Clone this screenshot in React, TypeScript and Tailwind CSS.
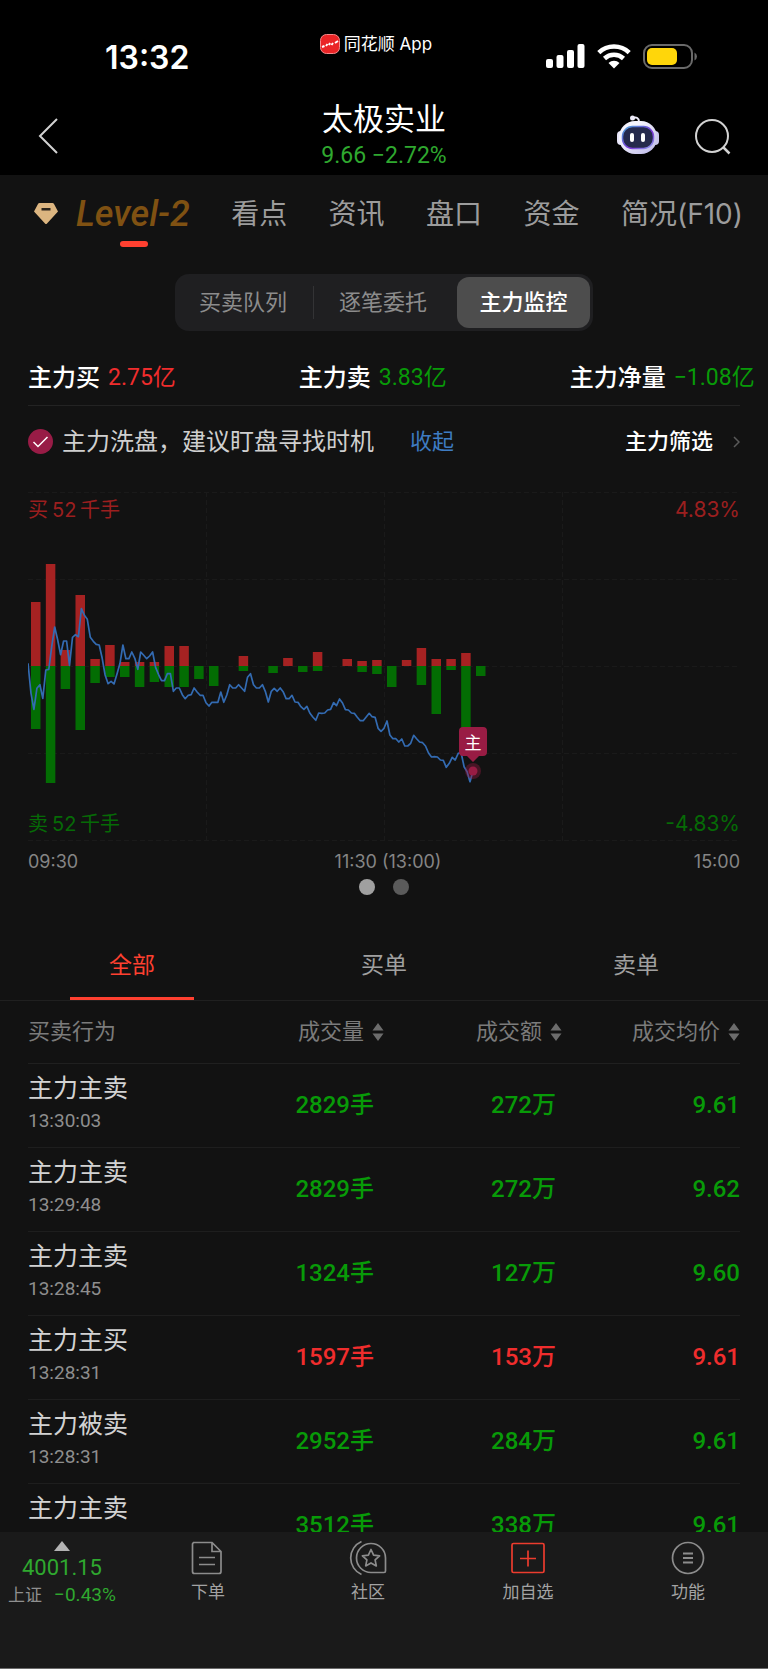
import type { ReactNode } from 'react';
import { clsx } from 'clsx';

const UP = 'text-[#f02d2d]';
const DOWN = 'text-[#089a08]';
const NUM = "font-[family-name:Roboto,'Noto_Sans_CJK_SC',sans-serif]";

const navTabs = ['看点', '资讯', '盘口', '资金', '简况(F10)'];

const trades = [
  { action: '主力主卖', time: '13:30:03', volume: '2829手', amount: '272万', price: '9.61', up: false },
  { action: '主力主卖', time: '13:29:48', volume: '2829手', amount: '272万', price: '9.62', up: false },
  { action: '主力主卖', time: '13:28:45', volume: '1324手', amount: '127万', price: '9.60', up: false },
  { action: '主力主买', time: '13:28:31', volume: '1597手', amount: '153万', price: '9.61', up: true },
  { action: '主力被卖', time: '13:28:31', volume: '2952手', amount: '284万', price: '9.61', up: false },
  { action: '主力主卖', time: '13:27:37', volume: '3512手', amount: '338万', price: '9.61', up: false },
];

// [buy, sell] per five minute slot
const volumes = [
  [64, 63], [102, 117], [16, 23], [71, 64], [7, 17], [21, 11], [4, 11], [4, 21], [4, 16], [20, 21],
  [20, 21], [0, 13], [0, 20], [0, 0], [10, 5], [0, 0], [0, 7], [8, 0], [0, 6], [14, 5],
  [0, 0], [7, 0], [5, 6], [6, 8], [0, 21], [6, 0], [18, 19], [7, 48], [7, 4], [13, 64], [0, 10],
];

// one price point per minute, three units to a pixel
const prices = [
  400, 490, 538, 475, 464, 505, 420, 418, 350, 291, 330, 374, 333, 333, 406, 322, 314, 320, 236, 256,
  268, 322, 334, 343, 345, 385, 435, 461, 454, 462, 432, 400, 345, 386, 386, 366, 385, 418, 366, 376,
  386, 378, 366, 412, 433, 452, 452, 431, 431, 484, 474, 474, 494, 506, 496, 494, 474, 486, 496, 496,
  518, 528, 517, 517, 517, 486, 517, 495, 464, 474, 474, 464, 474, 484, 442, 431, 464, 474, 474, 464,
  484, 516, 484, 475, 484, 474, 485, 506, 506, 496, 516, 517, 530, 538, 529, 549, 561, 571, 549, 550,
  549, 540, 538, 518, 527, 507, 519, 539, 540, 549, 550, 562, 572, 572, 561, 550, 560, 562, 595, 604,
  595, 573, 615, 626, 626, 636, 627, 648, 648, 640, 616, 626, 636, 638, 648, 669, 681, 680, 681, 690,
  691, 712, 700, 682, 690, 670, 668, 710, 725, 755, 723,
];

function StatusBar() {
  return (
    <div className="grid h-[90px] grid-cols-3 text-white">
      <div className="flex items-center pl-[105px] pt-[26px] text-[32px] font-semibold leading-8">13:32</div>
      <div className="flex items-start justify-center pr-4 pt-8">
        <div className="flex items-center gap-1 text-[17px] leading-6">
          <svg width="20" height="20" viewBox="0 0 20 20" aria-hidden="true">
            <rect x="0.5" y="0.5" width="19" height="19" rx="6" fill="#ea2426" stroke="#f5898a" />
            <path d="M2 13l2.500-1M6 12l1.500-2M9 11l1-2M11.500 11l1.500-2M15 9l3-2" fill="none" stroke="#fff" strokeWidth="2" />
          </svg>
          同花顺 App
        </div>
      </div>
      <div className="flex items-center justify-end gap-3 pr-[70px] pt-[22px]">
        <svg width="39" height="25" viewBox="0 0 39 25" fill="#fff" aria-hidden="true">
          <rect x="0" y="15" width="7" height="9" rx="2" />
          <rect x="10.500" y="11" width="7" height="13" rx="2" />
          <rect x="21" y="6" width="7" height="18" rx="2" />
          <rect x="31.500" y="0" width="7" height="24" rx="2" />
        </svg>
        <svg width="34" height="25" viewBox="0 0 34 25" aria-hidden="true">
          <g fill="none" stroke="#fff" strokeWidth="4.500">
            <path d="M1.800 8.700A22 22 0 0 1 32.200 8.700" />
            <path d="M7.500 14.500A14 14 0 0 1 26.500 14.500" />
          </g>
          <path d="M17 24.500l-5.500-5.500a8 8 0 0 1 11 0z" fill="#fff" />
        </svg>
        <svg width="55" height="25" viewBox="0 0 55 25" aria-hidden="true">
          <rect x="1" y="1" width="48" height="23" rx="8" fill="none" stroke="#6a6a6a" strokeWidth="2" />
          <rect x="4" y="4" width="30" height="17" rx="5" fill="#ffd60a" />
          <path d="M51.500 8.500v8q2.500-1.500 2.500-4t-2.500-4z" fill="#6a6a6a" />
        </svg>
      </div>
    </div>
  );
}

function RobotIcon() {
  return (
    <svg width="42" height="40" viewBox="0 0 42 40" aria-hidden="true">
      <defs>
        <linearGradient id="shell" x1="0" y1="0" x2="1" y2="1">
          <stop offset="0.3" stopColor="#f5f4fd" />
          <stop offset="1" stopColor="#b9b5e8" />
        </linearGradient>
        <linearGradient id="rim" x1="0" y1="0" x2="1" y2="1">
          <stop offset="0" stopColor="#4ca7d8" />
          <stop offset="0.6" stopColor="#7b35d8" />
          <stop offset="1" stopColor="#8fa4ee" />
        </linearGradient>
      </defs>
      <path d="M15 3q7-2 7 4" fill="none" stroke="#eeedfa" strokeWidth="2" />
      <circle cx="15.500" cy="3" r="2.500" fill="#eeedfa" />
      <rect x="0" y="16" width="8" height="14" rx="4" fill="#e6e4f8" />
      <rect x="34" y="16" width="8" height="14" rx="4" fill="#c9c6ec" />
      <rect x="2" y="6" width="38" height="33" rx="16" fill="url(#shell)" />
      <rect x="5.500" y="11.500" width="31" height="22" rx="10" fill="#252a4d" stroke="url(#rim)" strokeWidth="1.500" />
      <rect x="13" y="18" width="4" height="9" rx="2" fill="#fff" />
      <rect x="24" y="18" width="4" height="9" rx="2" fill="#fff" />
    </svg>
  );
}

function StockHeader() {
  return (
    <div className="grid h-[85px] grid-cols-[1fr_auto_1fr] px-9">
      <button type="button" aria-label="返回" className="flex items-center justify-self-start pt-[7px]">
        <svg width="24" height="36" viewBox="0 0 24 36" fill="none" stroke="#d2d2d2" strokeWidth="2">
          <path d="M21 1L4 18l17 17" />
        </svg>
      </button>
      <div className="pt-2 text-center">
        <h1 className="text-[31px] leading-[42px] text-white">太极实业</h1>
        <p className={clsx(NUM, 'text-[23px] leading-8 text-[#2fa82f]')}>9.66 −2.72%</p>
      </div>
      <div className="flex items-center justify-end gap-9 pt-[5px]">
        <button type="button" aria-label="助手">
          <RobotIcon />
        </button>
        <button type="button" aria-label="搜索" className="pt-1">
          <svg width="37" height="36" viewBox="0 0 37 36" fill="none" stroke="#d2d2d2" strokeWidth="2">
            <circle cx="17" cy="17" r="16" />
            <path d="M28 28l6.500 6.500" strokeWidth="2.500" />
          </svg>
        </button>
      </div>
    </div>
  );
}

function NavTabs() {
  return (
    <nav className="flex h-[78px] items-center justify-between whitespace-nowrap pl-[34px] pr-[25px] text-[28px] text-[#9c9c9c]">
      <button type="button" className="relative flex h-full items-center gap-[18px]">
        <svg width="24" height="22" viewBox="0 0 24 22" aria-hidden="true">
          <path d="M5.500 0h13q1 0 1.500 1l4 7.500L13 20.500q-1 1-2 0L0 8.500 4 1q.5-1 1.500-1z" fill="#dcb580" />
          <rect x="7.500" y="5" width="9" height="2.500" fill="#2a231a" />
        </svg>
        <span className="font-[family-name:Roboto,sans-serif] text-[36px] font-medium italic text-[#7f5112]">Level-2</span>
        <span className="absolute bottom-[6px] left-[86px] h-[6px] w-7 rounded-full bg-[#ff4030]" />
      </button>
      {navTabs.map((tab) => (
        <button type="button" key={tab}>
          {tab}
        </button>
      ))}
    </nav>
  );
}

function SegmentedControl() {
  return (
    <div className="mt-[21px] flex justify-center">
      <div className="flex h-[57px] items-center rounded-[14px] bg-[#1f1f21] p-[3px] text-[22px] text-[#8c8c8c]">
        <button type="button" className="w-[135px] pr-[5px]">买卖队列</button>
        <span className="h-[33px] w-px bg-[#333335]" />
        <button type="button" className="w-[143px] pr-[5px]">逐笔委托</button>
        <button type="button" className="h-[51px] w-[133px] rounded-[12px] bg-[#4d4d4d] font-medium text-white">
          主力监控
        </button>
      </div>
    </div>
  );
}

function Stat({ label, value, color }: { label: string; value: string; color: string }) {
  return (
    <div className="flex items-center gap-2 whitespace-nowrap">
      <span className="font-medium text-white">{label}</span>
      <span className={clsx(NUM, 'text-[23px]', color)}>{value}</span>
    </div>
  );
}

function Summary() {
  return (
    <>
      <div className="mt-5 grid h-[54px] grid-cols-[37%_37%_26%] pl-7 pr-2 text-[24px]">
        <Stat label="主力买" value="2.75亿" color={UP} />
        <Stat label="主力卖" value="3.83亿" color={DOWN} />
        <Stat label="主力净量" value="−1.08亿" color={DOWN} />
      </div>
      <div className="mx-7 flex h-[72px] items-center border-t border-[#232323]">
        <svg width="25" height="25" viewBox="0 0 25 25" aria-hidden="true">
          <circle cx="12.500" cy="12.500" r="12.500" fill="#981c46" />
          <path d="M5.500 13l4.500 4.500 9.500-9.500" fill="none" stroke="#fff" strokeWidth="1.500" />
        </svg>
        <span className="ml-[9px] text-[24px] text-[#cfcfcf]">主力洗盘，建议盯盘寻找时机</span>
        <button type="button" className="ml-9 text-[22px] text-[#3e7cc2]">收起</button>
        <button type="button" className="ml-auto flex items-center gap-5 text-[22px] font-medium text-white">
          主力筛选
          <svg width="7" height="12" viewBox="0 0 7 12" fill="none" stroke="#5a5a5a" strokeWidth="1.500">
            <path d="M1 1l5 5-5 5" />
          </svg>
        </button>
      </div>
    </>
  );
}

function MonitorChart() {
  const slot = 712 / 48;
  const line = prices.map((p, i) => `${((i * 712) / 240).toFixed(1)},${(p / 3 + 38).toFixed(1)}`).join(' ');

  return (
    <svg viewBox="0 0 712 349" className="w-full" role="img" aria-label="主力监控走势">
      <g stroke="#1a1a1a" strokeDasharray="5 3">
        {[0.5, 87.5, 174.5, 261.5, 348.5].map((y) => (
          <path key={y} d={`M0 ${y}H712`} />
        ))}
        {[178.5, 356.5, 534.5].map((x) => (
          <path key={x} d={`M${x} 0V349`} />
        ))}
      </g>
      {volumes.map(([buy, sell], i) => (
        <g key={i}>
          <rect x={i * slot + 3} y={174 - buy} width="9.500" height={buy} fill="#a62222" />
          <rect x={i * slot + 3} y="174" width="9.500" height={sell} fill="#036d03" />
        </g>
      ))}
      <polyline points={line} fill="none" stroke="#336bb2" strokeWidth="1.700" strokeLinejoin="round" />
      <g fill="#991c44">
        <circle cx="445" cy="279" r="8" opacity="0.4" />
        <circle cx="445" cy="279" r="4.500" />
        <path d="M435 235h20q4 0 4 4v21q0 4-4 4h-4l-6 6-6-6h-4q-4 0-4-4v-21q0-4 4-4z" />
      </g>
      <text x="445" y="257" textAnchor="middle" fontSize="17" fill="#fff">主</text>
      <g fontSize="20">
        <g fill="#9b1f1f">
          <text x="0" y="25">买</text>
          <text x="24" y="25">52</text>
          <text x="52" y="25">千手</text>
          <text x="712" y="25" textAnchor="end" fontSize="21">4.83%</text>
        </g>
        <g fill="#066a06">
          <text x="0" y="339">卖</text>
          <text x="24" y="339">52</text>
          <text x="52" y="339">千手</text>
          <text x="712" y="339" textAnchor="end" fontSize="21">-4.83%</text>
        </g>
      </g>
    </svg>
  );
}

function ChartPanel() {
  return (
    <div className="mx-7 mt-[15px]">
      <MonitorChart />
      <div className="grid h-[38px] grid-cols-[1fr_auto_1fr] items-center pt-[2px] text-[18px] text-[#858585]">
        <span>09:30</span>
        <span className="pl-2">11:30 (13:00)</span>
        <span className="text-right">15:00</span>
      </div>
      <div className="flex justify-center gap-[18px]">
        <button type="button" aria-label="第1页" className="h-4 w-4 rounded-full bg-[#a0a0a0]" />
        <button type="button" aria-label="第2页" className="h-4 w-4 rounded-full bg-[#5b5b5b]" />
      </div>
    </div>
  );
}

function OrderTabs() {
  return (
    <div className="mt-9 grid h-[70px] grid-cols-3 border-b border-[#202020] px-[6px] text-[23px] text-[#a0a0a0]">
      <button type="button" className="relative text-[#ff4030]">
        全部
        <span className="absolute inset-x-16 bottom-0 h-[3px] bg-[#ff4030]" />
      </button>
      <button type="button">买单</button>
      <button type="button">卖单</button>
    </div>
  );
}

function SortHeader({ children }: { children: ReactNode }) {
  return (
    <button type="button" className="inline-flex items-center gap-2">
      {children}
      <svg width="12" height="18" viewBox="0 0 12 18" fill="#6c6c6c" aria-hidden="true">
        <path d="M6 0l5.500 7.500H.5zM6 18l5.500-7.500H.5z" />
      </svg>
    </button>
  );
}

function TradeTable() {
  return (
    <div className="min-h-0 flex-1 overflow-hidden px-7">
      <table className="w-full table-fixed">
        <thead>
          <tr className="h-[62px] border-b border-[#202020] text-[22px] text-[#7b7b7b]">
            <th className="w-[29%] text-left font-normal">买卖行为</th>
            <th className="w-[21%] text-right font-normal"><SortHeader>成交量</SortHeader></th>
            <th className="w-1/4 text-right font-normal"><SortHeader>成交额</SortHeader></th>
            <th className="w-1/4 text-right font-normal"><SortHeader>成交均价</SortHeader></th>
          </tr>
        </thead>
        <tbody>
          {trades.map((t, i) => (
            <tr
              key={i}
              className={clsx(NUM, 'h-[84px] border-b border-[#1e1e1e] text-right text-[24px] font-medium', t.up ? UP : DOWN)}
            >
              <td className="text-left font-normal">
                <p className="text-[25px] leading-8 text-[#d2d2d2]">{t.action}</p>
                <p className="text-[19px] leading-8 text-[#8e8e8e]">{t.time}</p>
              </td>
              <td className="pr-[10px]">{t.volume}</td>
              <td className="pr-[6px]">{t.amount}</td>
              <td>{t.price}</td>
            </tr>
          ))}
        </tbody>
      </table>
    </div>
  );
}

function FooterItem({ label, children }: { label: string; children: ReactNode }) {
  return (
    <button type="button" className="flex flex-col items-center gap-1 text-[17px] leading-6 text-[#a3a3a3]">
      <svg width="38" height="36" viewBox="0 0 38 36" fill="none" stroke="#8c8c8c" strokeWidth="1.700">
        {children}
      </svg>
      {label}
    </button>
  );
}

function Footer() {
  return (
    <footer className="grid h-[137px] shrink-0 grid-cols-[1fr_5fr] border-b border-[#6b6b6b] bg-[#1a1a1a]">
      <button type="button" className={clsx(NUM, 'flex flex-col items-center whitespace-nowrap pr-1 pt-[9px] text-[#2fa82f]')}>
        <svg width="16" height="10" viewBox="0 0 16 10" fill="#b3b3b3" aria-hidden="true">
          <path d="M8 0l8 10H0z" />
        </svg>
        <span className="mt-[3px] text-[22px] leading-7">4001.15</span>
        <span className="flex items-center gap-3 text-[19px] leading-[26px]">
          <span className="text-[17px] text-[#8f8f8f]">上证</span>
          −0.43%
        </span>
      </button>
      <div className="grid grid-cols-4 items-start pt-2">
        <FooterItem label="下单">
          <path d="M4 2.500h19l9 9v20q0 2-2 2H5.500q-2 0-2-2V4.500q0-2 2-2M23 2.500v9h9M10 17.500h16M10 24.500h16" />
        </FooterItem>
        <FooterItem label="社区">
          <path d="M12.500 1.500a18 18 0 0 0 0 33M22 3.500a14.500 14.500 0 1 0 0 29h13q1.500 0 1.500-1.500V18A14.500 14.500 0 0 0 22 3.500z" />
          <path d="M22 9.500l2.600 5.600 6 .7-4.500 4.100 1.200 6-5.300-3-5.300 3 1.200-6-4.500-4.100 6-.7z" strokeLinejoin="round" />
        </FooterItem>
        <FooterItem label="加自选">
          <path d="M4.500 3.500h29q1.500 0 1.500 1.500v26q0 1.500-1.500 1.500h-29q-1.500 0-1.500-1.500V5q0-1.500 1.500-1.500zM19 10.500v16M11 18.500h16" stroke="#ec3c2e" />
        </FooterItem>
        <FooterItem label="功能">
          <circle cx="19" cy="18" r="15.500" />
          <path d="M14 13.500h10M14 18h10M14 22.500h10" strokeWidth="2" />
        </FooterItem>
      </div>
    </footer>
  );
}

export default function App() {
  return (
    <div className="flex h-screen flex-col overflow-hidden bg-[#121212] font-[family-name:Inter,'Noto_Sans_CJK_SC',sans-serif]">
      <header className="shrink-0 bg-black">
        <StatusBar />
        <StockHeader />
      </header>
      <main className="flex min-h-0 flex-1 flex-col">
        <NavTabs />
        <SegmentedControl />
        <Summary />
        <ChartPanel />
        <OrderTabs />
        <TradeTable />
      </main>
      <Footer />
    </div>
  );
}
